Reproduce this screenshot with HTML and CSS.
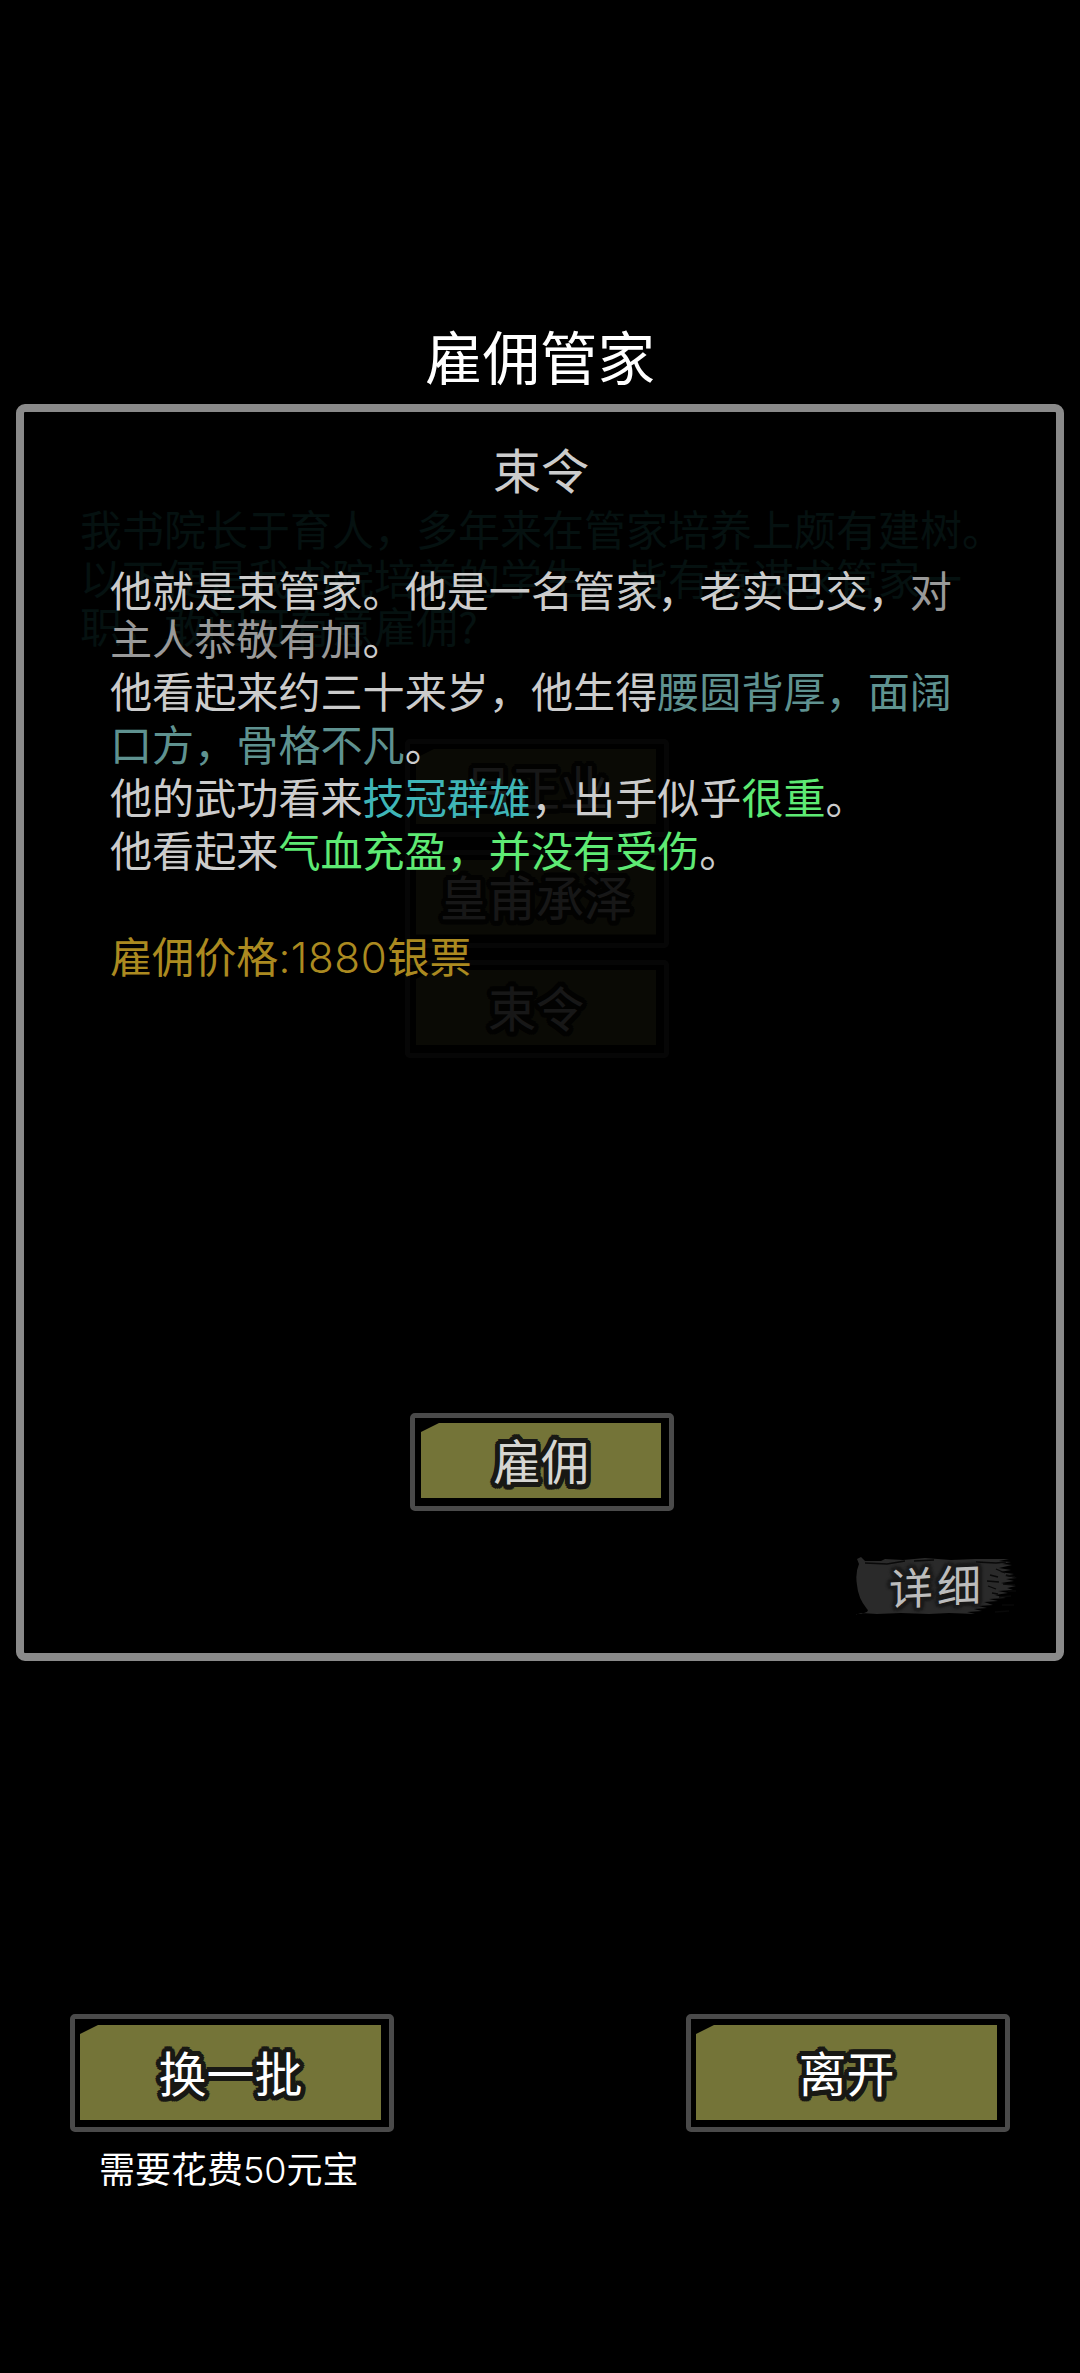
FILE: index.html
```html
<!DOCTYPE html>
<html lang="zh-CN">
<head>
<meta charset="utf-8">
<title>雇佣管家</title>
<link rel="stylesheet" href="styles.css">
</head>
<body>
<main class="screen">
  <h1 class="title">雇佣管家</h1>
  <section class="panel">
    <div class="backdrop">
      <p class="intro">我书院长于育人，多年来在管家培养上颇有建树。<br>以下便是我书院培养的学生，皆有意谋求管家一<br>职，敢问可有意雇佣?</p>
      <div class="candidates">
        <button class="btn small"><span class="face">吕正业</span></button>
        <button class="btn small"><span class="face">皇甫承泽</span></button>
        <button class="btn small"><span class="face">束令</span></button>
      </div>
    </div>
    <div class="dialog">
      <h2 class="name">束令</h2>
      <div class="bio">
        <p class="tight">他就是束管家。他是一名管家，老实巴交，<span class="dim">对</span></p>
        <p><span class="dim">主人恭敬有加</span>。</p>
        <p>他看起来约三十来岁，他生得<span class="teal">腰圆背厚，面阔</span></p>
        <p><span class="teal">口方，骨格不凡</span>。</p>
        <p>他的武功看来<span class="cyan">技冠群雄</span>，出手似乎<span class="green">很重</span>。</p>
        <p>他看起来<span class="green">气血充盈，并没有受伤</span>。</p>
        <p class="price">雇佣价格<span class="num">:1880</span>银票</p>
      </div>
      <button class="btn hire"><span class="face">雇佣</span></button>
      <button class="detail">
        <svg class="brush" viewBox="0 0 176 66" aria-hidden="true">
          <path fill="#2a2a2a" d="M5 2l4 4 16 0 4-2 18 1 22-2 26 2 24-1 34 0-10 2 12 1-9 2 10 1-13 3 12 2-11 2 14 2-9 2 12 2-11 1 8 2-13 2 15 3-9 2 6 2-15 1 10 2-13 2 11 3-17 1 9 2-14 1 9 3-15 1 9 2-13 1 8 2-15 1 8 2-26-1-20 1-28-1-24 1-16-1-6 2-5-1-13 1Q17 60 11 54Q2 43 1 30Q-1 18 3 9L1 4z"/>
          <path stroke="#090909" stroke-width="1.3" fill="none" d="M9 8l22 1 18-3M58 6l20-1M120 7l20 1 10-1M134 20l8 2M140 14l9 4M131 26l12 1M150 20l9 2M140 34l-8-3M147 29l12 1M143 42l12-1M146 50l12 0M139 57l14-1M136 38l6 1M152 36l8 0"/>
        </svg>
        <span class="detail-label">详细</span>
      </button>
    </div>
  </section>
  <footer class="actions">
    <div class="action">
      <button class="btn large"><span class="face">换一批</span></button>
      <p class="cost">需要花费<span class="num">50</span>元宝</p>
    </div>
    <button class="btn large"><span class="face">离开</span></button>
  </footer>
</main>
</body>
</html>
```
FILE: styles.css
```css
* { box-sizing: border-box; margin: 0; padding: 0; }
body {
  background: #000;
  color: #fff;
  font-family: "Noto Sans CJK SC", sans-serif;
  font-weight: 400;
}
h1, h2 { font-weight: inherit; }
.screen {
  width: 1080px;
  height: 2373px;
  padding: 316px 16px 0;
  overflow: hidden;
}
.title {
  height: 88px;
  font-size: 57.5px;
  line-height: 78px;
  text-align: center;
}
.panel {
  display: grid;
  height: 1257px;
  border: 8px solid #8a8a8a;
  border-radius: 9px;
}
.backdrop, .dialog { grid-area: 1 / 1; }
.backdrop { padding: 92px 56px 0; }
.intro {
  height: 235px;
  font-size: 42px;
  line-height: 48.5px;
  color: #051110;
  white-space: nowrap;
}
.candidates {
  display: flex;
  flex-direction: column;
  align-items: flex-start;
  gap: 12.5px;
  margin-left: 325px;
  opacity: .09;
}
.dialog {
  position: relative;
  display: flex;
  flex-direction: column;
  padding: 24px 0 0;
}
.name {
  height: 126px;
  padding-right: 2px;
  font-size: 48px;
  line-height: 64px;
  color: #ccc;
  text-align: center;
}
.bio {
  height: 851px;
  padding-left: 86px;
  font-size: 42.1px;
  line-height: 53px;
  color: #ccc;
  white-space: nowrap;
}
.bio .tight { height: 48px; }
.dim { color: #999; }
.teal { color: #5f9290; }
.cyan { color: #3fb5b7; }
.green { color: #5eea74; }
.price { margin-top: 53px; color: #ab8a20; }
.num { font-family: Inter, sans-serif; font-weight: 350; }
.price .num { letter-spacing: .6px; }
.btn {
  display: block;
  background: #000;
  border: 5px solid #4a4a4a;
  border-radius: 5px;
  font: inherit;
  font-size: 48px;
  color: #fff;
}
.face {
  display: flex;
  align-items: center;
  justify-content: center;
  width: 100%;
  height: 100%;
  padding-bottom: 4px;
  background: #747438;
  clip-path: polygon(0 9px, 18px 0, 100% 0, 100% 100%, 0 100%, 0 9px);
  line-height: 1;
  /* round outline, 5px in every direction */
  text-shadow:
    5px 0 #181814, 4.6px 1.9px #181814, 3.5px 3.5px #181814, 1.9px 4.6px #181814,
    0 5px #181814, -1.9px 4.6px #181814, -3.5px 3.5px #181814, -4.6px 1.9px #181814,
    -5px 0 #181814, -4.6px -1.9px #181814, -3.5px -3.5px #181814, -1.9px -4.6px #181814,
    0 -5px #181814, 1.9px -4.6px #181814, 3.5px -3.5px #181814, 4.6px -1.9px #181814,
    2px 2px #181814, -2px 2px #181814, -2px -2px #181814, 2px -2px #181814;
}
.small, .hire { width: 264px; height: 98px; padding: 5px 8px 8px 6px; }
.hire { align-self: center; color: #d6d6d2; }
.large { width: 324px; height: 118px; padding: 6px 8px 7px 5px; }
.detail {
  position: absolute;
  right: 28px;
  bottom: 32px;
  display: grid;
  width: 176px;
  height: 66px;
  background: none;
  border: 0;
  font: inherit;
}
.brush, .detail-label { grid-area: 1 / 1; }
.brush { width: 176px; height: 66px; }
.detail-label {
  position: relative;
  margin: 3px 0 0 33px;
  text-align: left;
  font-size: 44px;
  line-height: 50px;
  letter-spacing: 4px;
  color: #bcbcbc;
  text-shadow:
    4px 0 2px #1b1b1b, -4px 0 2px #1b1b1b, 0 4px 2px #1b1b1b, 0 -4px 2px #1b1b1b,
    3px 3px 2px #1b1b1b, -3px 3px 2px #1b1b1b, 3px -3px 2px #1b1b1b, -3px -3px 2px #1b1b1b;
  transform: skewY(-3deg);
}
.actions {
  display: flex;
  justify-content: space-between;
  align-items: flex-start;
  padding: 353px 54px 0;
}
.cost {
  padding: 10px 0 0 29px;
  font-size: 36px;
  line-height: 50px;
  white-space: nowrap;
}
```
